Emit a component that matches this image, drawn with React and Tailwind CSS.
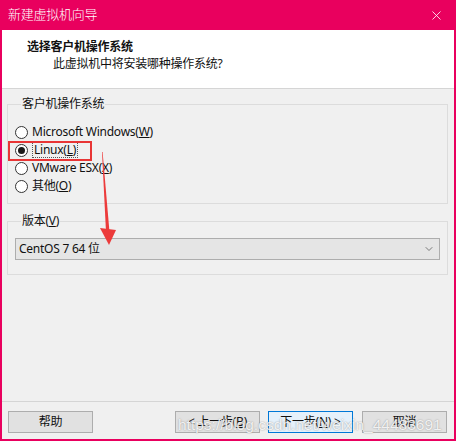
import React from "react";
import { X, ChevronDown } from "lucide-react";

const font = { fontFamily: '"Noto Sans", "Noto Sans CJK SC", sans-serif' };

function Radio({ checked, children, focused }) {
  return (
    <div className="h-[18px] flex items-center gap-[4px]">
      <span className="w-[13px] h-[13px] rounded-full border border-[#333333] bg-white flex items-center justify-center">
        {checked && <span className="w-[7px] h-[7px] rounded-full bg-[#1a1a1a]" />}
      </span>
      <span
        className={
          focused
            ? "border border-dotted border-[#555] px-[1px] leading-[14px]"
            : "leading-[14px]"
        }
      >
        {children}
      </span>
    </div>
  );
}

function Btn({ children, primary, className = "" }) {
  return (
    <button
      className={
        "h-[22px] w-[85px] text-[12px] text-[#111] border " +
        (primary ? "bg-[#e5f1fb] border-[#0078d7] " : "bg-[#e1e1e1] border-[#adadad] ") +
        className
      }
    >
      {children}
    </button>
  );
}

export default function App() {
  return (
    <div
      className="relative w-[456px] h-[441px] flex flex-col bg-[#f0f0f0] border-x-2 border-b-2 border-[#e9005e] text-[12px] text-[#111] tracking-[-0.25px]"
      style={font}
    >
      {/* TITLE BAR */}
      <div className="h-[30px] -mx-[2px] bg-[#e9005e] flex items-center justify-between pl-[8px] pr-[12px] text-white">
        <span className="text-[13px] font-light">新建虚拟机向导</span>
        <X size={15} strokeWidth={1.3} />
      </div>

      {/* HEADER */}
      <div className="h-[59px] bg-white border-b border-[#d5d5d5] flex flex-col pt-[8px]">
        <p className="pl-[25px] font-bold text-[12px] leading-[17px]">选择客户机操作系统</p>
        <p className="pl-[51px] leading-[17px]">此虚拟机中将安装哪种操作系统?</p>
      </div>

      {/* GUEST OS */}
      <fieldset className="mt-[8px] ml-[5px] mr-[6px] border border-[#dcdcdc] px-[7px] pt-[12px] pb-[8px]">
        <legend className="ml-[6px] px-[1px] leading-[14px]">客户机操作系统</legend>
        <Radio>
          Microsoft Windows(<u>W</u>)
        </Radio>
        <Radio checked focused>
          Linux(<u>L</u>)
        </Radio>
        <Radio>
          VMware ESX(<u>X</u>)
        </Radio>
        <Radio>
          其他(<u>O</u>)
        </Radio>
      </fieldset>

      {/* VERSION */}
      <fieldset className="mt-[10px] ml-[5px] mr-[6px] border border-[#dcdcdc] px-[7px] pt-[10px] pb-[14px]">
        <legend className="ml-[6px] px-[1px] leading-[14px]">
          版本(<u>V</u>)
        </legend>
        <div className="h-[22px] bg-[#e5e5e5] border border-[#adadad] flex items-center justify-between pl-[3px] pr-[4px]">
          <span>CentOS 7 64 位</span>
          <ChevronDown size={12} strokeWidth={1.5} className="text-[#555]" />
        </div>
      </fieldset>

      <div className="flex-1" />

      {/* FOOTER */}
      <div className="h-[38px] border-t border-[#d5d5d5] flex items-start pt-[9px] px-[6px]">
        <Btn>帮助</Btn>
        <div className="flex-1" />
        <Btn className="mr-[8px]">
          &lt; 上一步(<u>B</u>)
        </Btn>
        <Btn primary className="mr-[9px]">
          下一步(<u>N</u>) &gt;
        </Btn>
        <Btn className="mr-[1px]">取消</Btn>
      </div>

      {/* ANNOTATIONS */}
      <div className="absolute left-[6px] top-[141px] w-[84px] h-[20px] border-2 border-[#e83535]" />
      <svg className="absolute left-0 top-0" width="456" height="441">
        <polygon points="100,152 100.6,152 107.5,232 104,232" fill="#ec3b3b" />
        <polygon points="98,228 114,230 107,245" fill="#ec3b3b" />
      </svg>
      <span
        className="absolute left-[176px] top-[413px] text-[15.5px] tracking-normal text-white/85 pointer-events-none whitespace-nowrap"
        style={{ fontFamily: '"Liberation Sans", sans-serif', textShadow: "0 0 1.5px rgba(110,110,110,0.8)" }}
      >
        https://blog.csdn.net/weixin_44483691
      </span>
    </div>
  );
}
